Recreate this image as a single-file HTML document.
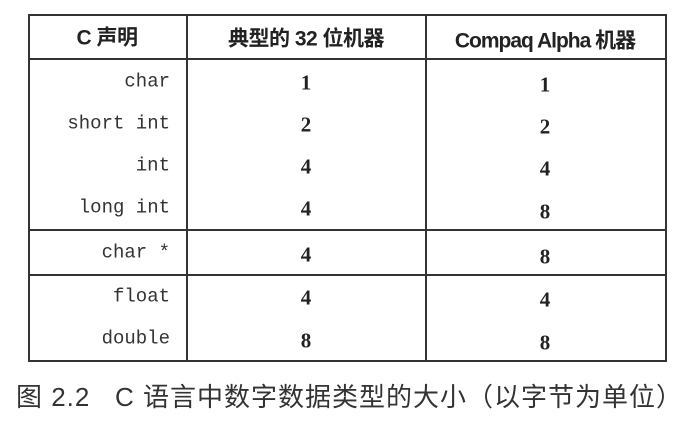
<!DOCTYPE html>
<html><head><meta charset="utf-8"><style>
body{margin:0;width:677px;height:424px;background:#fff;position:relative;overflow:hidden;color:#222}
.t{position:absolute;white-space:nowrap;line-height:1}
.h{font-family:"Liberation Sans","Noto Sans CJK SC",sans-serif;font-weight:bold;font-size:21px;transform:translate(-50%,-50%);letter-spacing:-0.5px}
.m{font-family:"Liberation Mono",monospace;font-size:19px;transform:translateY(-50%);right:507px;color:#333}
.n{font-family:"Liberation Serif",serif;font-size:21px;transform:translate(-50%,-50%);font-weight:bold}
.l{position:absolute;background:#333}
</style></head><body>
<div class="l" style="left:28px;top:14px;width:638px;height:2px"></div>
<div class="l" style="left:28px;top:58px;width:638px;height:2px"></div>
<div class="l" style="left:28px;top:229px;width:638px;height:2px"></div>
<div class="l" style="left:28px;top:274px;width:638px;height:2px"></div>
<div class="l" style="left:28px;top:360px;width:638px;height:2px"></div>
<div class="l" style="left:28px;top:14px;width:2px;height:348px"></div>
<div class="l" style="left:186px;top:14px;width:2px;height:348px"></div>
<div class="l" style="left:425px;top:14px;width:2px;height:348px"></div>
<div class="l" style="left:665px;top:14px;width:2px;height:348px"></div>
<div class="t h" style="left:107px;top:38px">C 声明</div>
<div class="t h" style="left:306px;top:39px">典型的 32 位机器</div>
<div class="t h" style="left:545px;top:41px;letter-spacing:-1px">Compaq Alpha 机器</div>
<div class="t m" style="top:82px">char</div>
<div class="t m" style="top:124px">short int</div>
<div class="t m" style="top:166px">int</div>
<div class="t m" style="top:208px">long int</div>
<div class="t m" style="top:253px">char *</div>
<div class="t m" style="top:297px">float</div>
<div class="t m" style="top:339px">double</div>
<div class="t n" style="left:306px;top:83px">1</div>
<div class="t n" style="left:306px;top:125px">2</div>
<div class="t n" style="left:306px;top:167px">4</div>
<div class="t n" style="left:306px;top:209px">4</div>
<div class="t n" style="left:306px;top:255px">4</div>
<div class="t n" style="left:306px;top:298px">4</div>
<div class="t n" style="left:306px;top:341px">8</div>
<div class="t n" style="left:545px;top:85px">1</div>
<div class="t n" style="left:545px;top:127px">2</div>
<div class="t n" style="left:545px;top:169px">4</div>
<div class="t n" style="left:545px;top:212px">8</div>
<div class="t n" style="left:545px;top:257px">8</div>
<div class="t n" style="left:545px;top:300px">4</div>
<div class="t n" style="left:545px;top:343px">8</div>
<div class="t" style="left:16px;top:384px;font-family:'Liberation Sans','Noto Sans CJK SC',sans-serif;font-size:26px;color:#333;letter-spacing:1px">图 2.2&nbsp;&nbsp;&nbsp;C 语言中数字数据类型的大小（以字节为单位）</div>
</body></html>
